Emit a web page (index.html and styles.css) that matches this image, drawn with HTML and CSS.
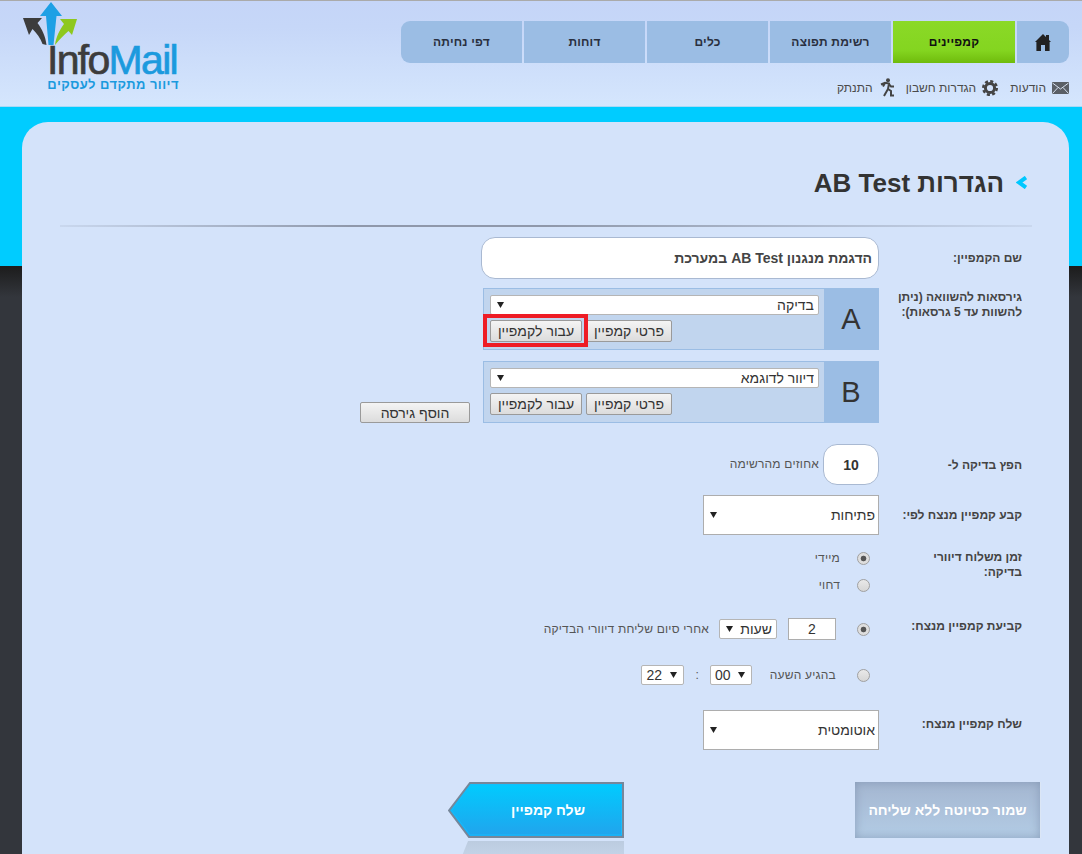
FILE: index.html
```html
<!DOCTYPE html>
<html lang="he" dir="rtl">
<head>
<meta charset="utf-8">
<title>InfoMail</title>
<link rel="stylesheet" href="styles.css">
</head>
<body>
<header class="header">
  <div class="header-right">
    <nav class="nav">
      <a class="nav-item nav-home"><svg class="icon-home" viewBox="0 0 16 17"><path d="M8 0 L11 3 V1 H14 V6 L16 8 H14.6 V17 H10 V11 H6 V17 H1.4 V8 H0 Z"/></svg></a>
      <a class="nav-item nav-active">קמפיינים</a>
      <a class="nav-item">רשימת תפוצה</a>
      <a class="nav-item">כלים</a>
      <a class="nav-item">דוחות</a>
      <a class="nav-item">דפי נחיתה</a>
    </nav>
    <div class="sublinks">
      <a class="sublink"><svg class="icon-mail" viewBox="0 0 17 12"><rect width="17" height="12" fill="#5a5f66"/><path d="M0.5 1 L8.5 7 L16.5 1 M0.5 11.5 L6 5.5 M16.5 11.5 L11 5.5" fill="none" stroke="#d5dfee" stroke-width="1"/></svg>הודעות</a>
      <a class="sublink"><svg class="icon-gear" viewBox="0 0 16 16"><circle cx="8" cy="8" r="4.6" fill="none" stroke="#444" stroke-width="3"/><circle cx="8" cy="8" r="6.8" fill="none" stroke="#444" stroke-width="2.4" stroke-dasharray="3.1 2.24"/></svg>הגדרות חשבון</a>
      <a class="sublink"><svg class="icon-run" viewBox="0 0 15 19"><circle cx="9" cy="2.2" r="2" fill="#444"/><path d="M2 6.5 L6 4.8 L10 5.5 L9 11 L5 18 M9 11 L12 13 L12 17.5 H15 M10 6 L12 8.5 L15 8.5 M6 5 L4 8.5" fill="none" stroke="#444" stroke-width="2"/></svg>התנתק</a>
    </div>
  </div>
  <div class="logo">
    <svg class="logo-arrows" viewBox="23 2 54 44">
      <path fill="#1ea0e5" d="M51 2 L62 16 H56.500 L53.500 45 H48.500 L46 16 H40 Z"/>
      <path fill="#3c3c3c" d="M23 18 H42 L37.500 23 C42 29 45.500 36 46.500 45 L42.500 44 C40.500 38 36.500 33 32.500 29 L29 35 Z"/>
      <path fill="#8ec81e" d="M77 19 H60 L64 24 C59.500 30 56 37 55 45 C60 39 64 35 68.500 31 L72 35 Z"/>
    </svg>
    <div class="logo-name"><span class="logo-info">Info</span><span class="logo-mail">Mail</span></div>
    <div class="logo-tag" dir="rtl">דיוור מתקדם לעסקים</div>
  </div>
</header>

<main class="stage">
  <section class="card">
    <div class="title-row">
      <svg class="chevron" viewBox="0 0 11 13"><path d="M10 1.500 L3 6.500 L10 11.500" fill="none" stroke="#00c8ff" stroke-width="4"/></svg>
      <h1 class="title">הגדרות AB Test</h1>
    </div>
    <div class="divider"></div>

    <form class="form">
      <div class="row row-name">
        <label class="label">שם הקמפיין:</label>
        <input class="input-name" type="text" value="הדגמת מנגנון AB Test במערכת">
      </div>

      <div class="row row-versions">
        <label class="label">גירסאות להשוואה (ניתן להשוות עד 5 גרסאות):</label>
        <div class="versions">
          <div class="version">
            <div class="version-letter">A</div>
            <div class="version-body">
              <select class="select select-wide"><option>בדיקה</option></select>
              <div class="version-actions">
                <button type="button" class="btn btn-details">פרטי קמפיין</button>
                <button type="button" class="btn btn-go btn-marked">עבור לקמפיין</button>
              </div>
            </div>
          </div>
          <div class="version">
            <div class="version-letter">B</div>
            <div class="version-body">
              <select class="select select-wide"><option>דיוור לדוגמא</option></select>
              <div class="version-actions">
                <button type="button" class="btn btn-details">פרטי קמפיין</button>
                <button type="button" class="btn btn-go">עבור לקמפיין</button>
              </div>
            </div>
          </div>
        </div>
        <button type="button" class="btn btn-add">הוסף גירסה</button>
      </div>

      <div class="row row-percent">
        <label class="label">הפץ בדיקה ל-</label>
        <div class="percent">
          <input class="input-percent" type="text" value="10">
          <span class="note">אחוזים מהרשימה</span>
        </div>
      </div>

      <div class="row row-winner">
        <label class="label">קבע קמפיין מנצח לפי:</label>
        <select class="select select-big"><option>פתיחות</option></select>
      </div>

      <div class="row row-timing">
        <label class="label">זמן משלוח דיוורי בדיקה:</label>
        <div class="choices choices-timing">
          <div class="choice"><input class="radio" type="radio" name="timing" checked><span class="note note-near">מיידי</span></div>
          <div class="choice"><input class="radio" type="radio" name="timing"><span class="note note-near">דחוי</span></div>
        </div>
      </div>

      <div class="row row-decide">
        <label class="label">קביעת קמפיין מנצח:</label>
        <div class="choices choices-decide">
          <div class="choice">
            <input class="radio" type="radio" name="decide" checked>
            <input class="input-hours" type="text" value="2">
            <select class="select select-unit"><option>שעות</option></select>
            <span class="note">אחרי סיום שליחת דיוורי הבדיקה</span>
          </div>
          <div class="choice">
            <input class="radio" type="radio" name="decide">
            <span class="note note-hour">בהגיע השעה</span>
            <select class="select select-time"><option>00</option></select>
            <span class="note colon">:</span>
            <select class="select select-time"><option>22</option></select>
          </div>
        </div>
      </div>

      <div class="row row-send">
        <label class="label">שלח קמפיין מנצח:</label>
        <select class="select select-big"><option>אוטומטית</option></select>
      </div>

      <div class="actions">
        <button type="button" class="btn-draft">שמור כטיוטה ללא שליחה</button>
        <button type="button" class="btn-send">
          <svg class="send-shape" viewBox="0 0 176 56" preserveAspectRatio="none">
            <defs><linearGradient id="sendFill" x1="0" y1="0" x2="0" y2="1"><stop offset="0" stop-color="#00ccff"/><stop offset="1" stop-color="#22a3ec"/></linearGradient></defs>
            <path d="M175 1 H22 L1 28.500 L21 55 H175 Z" fill="url(#sendFill)" stroke="#76879a" stroke-width="2"/>
            <path d="M173.500 2.800 H23 L3.500 28.500 L22 53 H173.500 Z" fill="none" stroke="#16bcfd" stroke-width="1"/>
          </svg>
          <span class="send-text">שלח קמפיין</span>
        </button>
      </div>
    </form>
  </section>
</main>
</body>
</html>
```
FILE: styles.css
```css
* { box-sizing: border-box; }
html, body { height: 100%; }
body {
  margin: 0;
  height: 854px;
  overflow: hidden;
  display: flex;
  flex-direction: column;
  font-family: "Liberation Sans", Arial, sans-serif;
  color: #444;
  background: #33363c;
}

/* header */
.header {
  flex: none;
  height: 107px;
  display: flex;
  justify-content: space-between;
  align-items: flex-start;
  padding: 0 13px 0 0;
  border-top: 1px solid #aaa;
  border-bottom: 1px solid #a8d9f6;
  background: linear-gradient(#c5d5f8 0, #c6d7f8 25%, #d5e6fd 100%);
}
.nav {
  display: flex;
  gap: 2px;
  width: 668px;
  height: 42px;
  margin-top: 20px;
}
.nav-item {
  width: 121px;
  display: flex;
  align-items: center;
  justify-content: center;
  background: #9bbde4;
  color: #2a3040;
  font-size: 12px;
  font-weight: bold;
  letter-spacing: 0.2px;
}
.nav-item:last-child { border-top-left-radius: 9px; border-bottom-left-radius: 9px; }
.nav-home { width: 52px; border-top-right-radius: 9px; border-bottom-right-radius: 9px; padding-top: 1px; }
.nav-active { width: 122px; background: linear-gradient(#8bd927 0, #84d520 70%, #6fbb0c 100%); color: #111; }
.icon-home { width: 16px; height: 17px; fill: #222; }

.sublinks {
  display: flex;
  gap: 12px;
  margin-top: 15px;
  height: 19px;
  align-items: center;
}
.sublink {
  display: flex;
  align-items: center;
  gap: 6px;
  font-size: 12px;
  color: #4a4a4a;
}
.icon-mail { width: 17px; height: 12px; }
.icon-gear { width: 16px; height: 16px; }
.icon-run { width: 15px; height: 19px; }

/* logo */
.logo {
  direction: ltr;
  width: 180px;
  margin-top: 1px;
  padding-left: 23px;
}
.logo-arrows { display: block; width: 54px; height: 44px; }
.logo-name {
  margin: -3px 0 0 24px;
  height: 35px;
  font-size: 41px;
  line-height: 34px;
  white-space: nowrap;
  letter-spacing: -1.7px;
  -webkit-text-stroke: 0.7px;
}
.logo-info { color: #3c3c3c; }
.logo-mail { color: #1b9ade; }
.logo-tag {
  width: 132px;
  margin: 0 0 0 24px;
  font-size: 13px;
  line-height: 14px;
  font-weight: bold;
  color: #1b9ade;
  white-space: nowrap;
  letter-spacing: 0.45px;
}

/* stage */
.stage {
  flex: 1;
  min-height: 0;
  padding: 15px 13px 0 22px;
  background: linear-gradient(#00ccff 0, #00ccff 159px, #1c1c1c 159px, #33363c 190px);
}
.card {
  height: 732px;
  overflow: hidden;
  padding: 44px 37px 0 38px;
  border-radius: 26px 26px 0 0;
  background: #d4e3fa;
}
.title-row {
  display: flex;
  align-items: center;
  gap: 12px;
  height: 33px;
  padding-right: 5px;
}
.chevron { width: 11px; height: 13px; }
.title {
  margin: 0;
  padding-top: 1px;
  font-size: 26px;
  font-weight: bold;
  color: #333;
  line-height: 32px;
}
.divider {
  height: 2px;
  margin-top: 26px;
  background: linear-gradient(to left, rgba(140,150,170,0.15), #8f98aa 50%, #8f98aa 70%, rgba(140,150,170,0.15));
}

/* form */
.form { padding-right: 10px; margin-top: 10px; }
.row { display: flex; align-items: flex-start; }
.label {
  flex: none;
  width: 143px;
  padding-left: 14px;
  font-size: 12px;
  line-height: 15px;
  font-weight: bold;
  color: #444;
}
.input-name {
  width: 398px;
  height: 42px;
  padding: 0 6px;
  border: 1px solid #a9b9d2;
  border-radius: 14px;
  background: #fff;
  font: bold 14px "Liberation Sans", Arial, sans-serif;
  color: #444;
  text-align: right;
  direction: rtl;
}
.row-name .label { padding-top: 14px; }

.row-versions { margin-top: 9px; }
.row-versions .label { padding-top: 2px; }
.versions { width: 396px; display: flex; flex-direction: column; gap: 11px; }
.version {
  display: flex;
  height: 62px;
  border: 1px solid #9bbde4;
  background: #c1d5ee;
}
.version-letter {
  flex: none;
  width: 54px;
  margin: -1px 0;
  display: flex;
  align-items: center;
  justify-content: center;
  background: #9bbde4;
  font-size: 29px;
  color: #333;
}
.version-body { flex: 1; padding: 6px 5px 0 6px; }
.version-actions { display: flex; justify-content: flex-end; gap: 4px; margin-top: 5px; }
.btn {
  height: 22px;
  padding: 0;
  border: 1px solid #9a9a9a;
  border-radius: 2px;
  background: linear-gradient(#f4f4f4, #dcdcdc);
  font: 14px "Liberation Sans", Arial, sans-serif;
  color: #333;
}
.btn-details { width: 86px; }
.btn-go { width: 92px; }
.btn-marked { position: relative; }
.btn-marked::after {
  content: "";
  position: absolute;
  top: -7px;
  bottom: -6px;
  left: -8px;
  right: -7px;
  border: 4px solid #ee1c25;
}
.btn-add { width: 110px; height: 21px; margin-right: 13px; align-self: flex-end; }

.select {
  appearance: none;
  -webkit-appearance: none;
  display: block;
  height: 20px;
  padding: 0 4px;
  border: 1px solid #b5b5b5;
  border-radius: 2px;
  font: 14px "Liberation Sans", Arial, sans-serif;
  color: #333;
  background: #fff url("data:image/svg+xml,%3Csvg xmlns='http://www.w3.org/2000/svg' width='7' height='6'%3E%3Cpath d='M0 0H7L3.500 6Z' fill='%23222'/%3E%3C/svg%3E") no-repeat left 6px center;
}
.select-wide { width: 100%; }
.select-big { width: 176px; height: 40px; padding-right: 3px; border-color: #adadad; border-radius: 0; }
.select-unit { width: 58px; margin-right: 11px; }
.select-time {
  direction: ltr;
  width: 43px;
  text-align: left;
  background-position: right 6px center;
}

.row-percent { margin-top: 21px; }
.row-percent .label { padding-top: 14px; }
.percent { display: flex; align-items: center; gap: 4px; }
.input-percent {
  width: 56px;
  height: 41px;
  border: 1px solid #a9b9d2;
  border-radius: 14px;
  background: #fff;
  font: bold 14px "Liberation Sans", Arial, sans-serif;
  color: #333;
  text-align: center;
}
.note { font-size: 12px; color: #555; white-space: nowrap; letter-spacing: 0.2px; }
.percent .note { padding-bottom: 2px; }

.row-winner { margin-top: 10px; }
.row-winner .label { padding-top: 13px; }

.row-timing { margin-top: 13px; }
.row-timing .label { padding-top: 2px; }
.choices { display: flex; flex-direction: column; }
.choices-timing { gap: 7px; }
.choices-decide { gap: 25px; }
.choice { display: flex; align-items: center; min-height: 20px; }
.radio {
  appearance: none;
  -webkit-appearance: none;
  flex: none;
  width: 13px;
  height: 13px;
  margin: 0 9px 0 21px;
  border: 1px solid #a0a0a0;
  border-radius: 50%;
  background: linear-gradient(#e9e9e9, #d6d6d6);
}
.radio:checked { background: radial-gradient(circle, #555 0, #555 2.500px, #dedede 3.200px); }
.note-near { margin-right: -4px; }
.input-hours {
  width: 48px;
  height: 22px;
  padding: 0;
  border: 1px solid #adadad;
  background: #fff;
  font: 14px "Liberation Sans", Arial, sans-serif;
  color: #333;
  text-align: center;
}
.select-unit + .note { margin-right: 10px; }
.note-hour { width: 66px; margin-left: 18px; }
.colon { margin: 0 11px; }
.note-hour + .select-time { width: 42px; }

.row-decide { margin-top: 23px; }
.row-decide .label { padding-top: 1px; }
.row-send { margin-top: 25px; }
.row-send .label { padding-top: 7px; }

/* bottom actions */
.actions {
  display: flex;
  gap: 231px;
  margin-top: 32px;
  margin-right: -19px;
}
.btn-draft {
  width: 186px;
  height: 56px;
  padding: 0;
  border: 0;
  border-right: 1px solid #dbe6f5;
  background: linear-gradient(#a4b6d0, #b3cce5);
  box-shadow: inset 0 0 10px rgba(125,145,175,0.75);
  font: bold 14px "Liberation Sans", Arial, sans-serif;
  color: #fff;
}
.btn-send {
  position: relative;
  width: 176px;
  height: 56px;
  padding: 0 0 0 24px;
  border: 0;
  background: none;
  font: bold 14px "Liberation Sans", Arial, sans-serif;
  color: #fff;
}
.btn-send::after {
  content: "";
  position: absolute;
  top: 59px;
  left: 12px;
  right: 0;
  height: 20px;
  background: linear-gradient(#bccce0, #c6d5ea);
  clip-path: polygon(8px 0, 100% 0, 100% 100%, 0 100%);
}
.send-shape { position: absolute; inset: 0; width: 100%; height: 100%; }
.send-text { position: relative; }
```
